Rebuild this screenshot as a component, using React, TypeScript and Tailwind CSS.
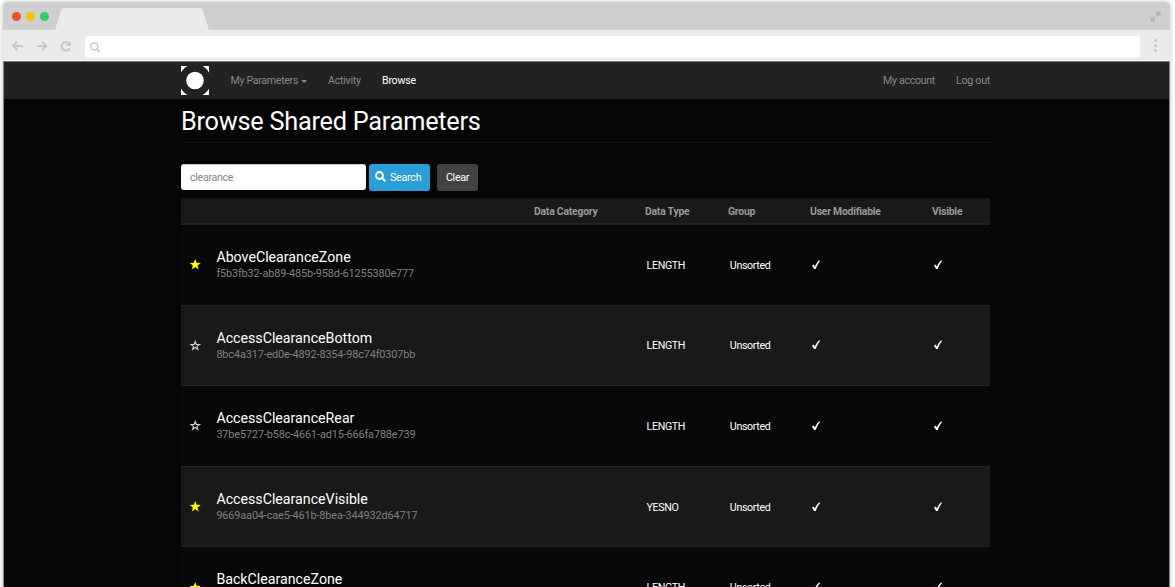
import React from "react";

type Parameter = {
  name: string;
  guid: string;
  type: string;
  starred: boolean;
};

const parameters: Parameter[] = [
  { name: "AboveClearanceZone", guid: "f5b3fb32-ab89-485b-958d-61255380e777", type: "LENGTH", starred: true },
  { name: "AccessClearanceBottom", guid: "8bc4a317-ed0e-4892-8354-98c74f0307bb", type: "LENGTH", starred: false },
  { name: "AccessClearanceRear", guid: "37be5727-b58c-4661-ad15-666fa788e739", type: "LENGTH", starred: false },
  { name: "AccessClearanceVisible", guid: "9669aa04-cae5-461b-8bea-344932d64717", type: "YESNO", starred: true },
  { name: "BackClearanceZone", guid: "", type: "LENGTH", starred: true },
];

const columns = "grid grid-cols-[35px_318px_111px_83px_82px_122px_1fr]";

function Star({ filled }: { filled: boolean }) {
  return filled ? (
    <svg className="h-[11px] w-[11px]" viewBox="0 0 11 11" fill="#ffff00">
      <path d="M5.2 0 6.6 3.8 10.8 3.9 7.5 6.5 8.7 10.4 5.2 8.1 1.8 10.4 2.9 6.5 -0.300 3.9 3.8 3.8Z" />
    </svg>
  ) : (
    <svg className="h-[11px] w-[11px]" viewBox="0 0 11 11" fill="none" stroke="#d0d0d0" strokeWidth="1.1">
      <path d="M5.2 1.5 6.2 4.5 9.400 4.600 6.900 6.400 7.800 9.300 5.200 7.500 2.600 9.300 3.500 6.400 1 4.600 4.200 4.500Z" />
    </svg>
  );
}

function Check() {
  return (
    <svg className="h-[10px] w-[9px]" viewBox="0 0 9 10" fill="#fff">
      <path d="M0 5.700 1.600 4.600 2.900 6.400C3.900 4 5.200 1.900 6.900 0.400L8.300 0.700C6.400 2.800 4.800 5.700 3.700 9H2.100Z" />
    </svg>
  );
}

function BrowserChrome() {
  return (
    <div className="shrink-0">
      <div className="flex h-7 items-stretch rounded-t-[4px] bg-[#cfcfcf]">
        <div className="flex w-[52px] shrink-0 items-center gap-[5px] pl-[9px]">
          <span className="h-[9px] w-[9px] rounded-full bg-[#ee4b33]" />
          <span className="h-[9px] w-[9px] rounded-full bg-[#f2c500]" />
          <span className="h-[9px] w-[9px] rounded-full bg-[#2ecb71]" />
        </div>
        <svg className="h-7 w-[154px]" viewBox="0 0 154 28" fill="#ebebeb">
          <path d="M0 28 6 8.5Q6.8 6 9 6H145Q147.200 6 148 8.500L154 28Z" />
        </svg>
        <div className="flex flex-1 items-center justify-end pr-[9px]">
          <svg className="h-[11px] w-[11px]" viewBox="0 0 11 11" fill="#b2b2b2">
            <path d="M5.300 0.500H10.5V5.700L8.900 4.100 7.100 5.700 5.300 3.900 6.900 2.100ZM0.500 5.300 2.100 6.900 3.900 5.300 5.700 7.100 4.100 8.900 5.700 10.500H0.500Z" />
          </svg>
        </div>
      </div>
      <div className="flex h-[30px] items-center bg-[#ebebeb] pt-[5px]">
        <svg className="-mt-[3px] ml-2 h-4 w-[61px]" viewBox="0 0 61 16" fill="none" stroke="#c7c7c7" strokeWidth="2">
          <path d="M12 8H2.500M6.300 3.700 2.200 8 6.300 12.300M26 8H35M31.200 3.700 35.300 8 31.200 12.300" />
          <path d="M58.500 10.700A4.300 4.300 0 1 1 58.300 5.800" strokeWidth="2.200" />
          <path d="M60 3V8H55Z" fill="#c7c7c7" stroke="none" />
        </svg>
        <div className="-mt-[1px] ml-[13px] flex h-[22px] w-[1055px] shrink-0 items-center rounded-[3px] bg-white pl-[5px]">
          <svg className="h-[11px] w-[11px]" viewBox="0 0 11 11" fill="none" stroke="#c7c7c7" strokeWidth="1.4">
            <circle cx="4.300" cy="4.500" r="3.500" />
            <path d="M6.900 7.100 9.600 9.800" strokeWidth="1.700" />
          </svg>
        </div>
        <div className="-mt-[4px] ml-[14px] flex flex-col gap-[2px]">
          <span className="h-[3px] w-[3px] rounded-full bg-[#c7c7c7]" />
          <span className="h-[3px] w-[3px] rounded-full bg-[#c7c7c7]" />
          <span className="h-[3px] w-[3px] rounded-full bg-[#c7c7c7]" />
        </div>
      </div>
      <div className="h-px bg-[#fafafa]" />
      <div className="h-px bg-[#777a78]" />
    </div>
  );
}

function NavBar() {
  return (
    <nav className="h-[37px] shrink-0 bg-[#222222]">
      <div className="ml-[177px] flex h-full w-[809px] items-center text-[10.7px] tracking-[-0.28px] text-[#888888]">
        <svg className="h-[29px] w-[28px]" viewBox="0 0 28 29" preserveAspectRatio="none">
          <path fill="#fff" d="M0 0H28V29H0Z" />
          <ellipse cx="14" cy="14.500" rx="16" ry="16.300" fill="#222" />
          <circle cx="14" cy="14.500" r="8.800" fill="#fff" />
        </svg>
        <span className="ml-[21.5px] w-[67px] whitespace-nowrap pt-[2px] tracking-[-0.35px]">My Parameters</span>
        <span className="ml-[3px] mt-[2px] border-x-[3px] border-t-[3px] border-x-transparent border-t-[#888888]" />
        <span className="ml-[21.5px] w-[54px] pt-[2px]">Activity</span>
        <span className="pt-[2px] text-white">Browse</span>
        <span className="ml-auto pt-[2px] tracking-[-0.35px]">My account</span>
        <span className="ml-[21px] pt-[2px]">Log out</span>
      </div>
    </nav>
  );
}

function SearchForm() {
  return (
    <form className="mt-[21px] flex h-[27px] text-[10.7px] tracking-[-0.32px]" onSubmit={(e) => e.preventDefault()}>
      <input
        className="h-[26px] w-[185px] rounded-[3px] border-t border-[#cccccc] bg-white px-[9px] text-[#888888] outline-none"
        defaultValue="clearance"
      />
      <button className="ml-[3px] flex w-[61px] items-center rounded-[3px] bg-[#2a9fd6] pl-[6px] text-white">
        <svg className="-mt-[3px] mr-[4px] h-[11px] w-[11px]" viewBox="0 0 11 11" fill="none" stroke="#fff">
          <circle cx="4.500" cy="4.500" r="3.500" strokeWidth="1.800" />
          <path d="M7 7 10.300 10.300" strokeWidth="2.200" />
        </svg>
        <span className="pt-px tracking-[-0.25px]">Search</span>
      </button>
      <button className="ml-[7px] w-[41px] rounded-[3px] bg-[#424242] pt-px text-white">Clear</button>
    </form>
  );
}

function ParameterTable() {
  return (
    <div className="mt-[7px]">
      <div className={`${columns} h-[27px] items-center border-b-2 border-[#222222] bg-[#191919] pt-[2px] text-[10.4px] font-bold tracking-[-0.22px] text-[#999999]`}>
        <span />
        <span />
        <span>Data Category</span>
        <span>Data Type</span>
        <span>Group</span>
        <span>User Modifiable</span>
        <span>Visible</span>
      </div>
      {parameters.map((p) => (
        <div
          key={p.name}
          className={`${columns} h-[80.6px] items-center border-b border-[#242424] text-[10.7px] tracking-[-0.35px] text-white odd:bg-[#191919] even:bg-[#080808]`}
        >
          <span className="pl-[9px]">
            <Star filled={p.starred} />
          </span>
          <span className="pl-[0.4px] pt-[0.5px]">
            <span className="block text-[14.2px] leading-[17px] tracking-normal">{p.name}</span>
            <span className="block h-[15px] text-[10.9px] leading-[15px] tracking-[-0.14px] text-[#808080]">{p.guid}</span>
          </span>
          <span />
          <span className="pl-[1.5px] pt-[2px]">{p.type}</span>
          <span className="pl-[1.8px] pt-[2px]">Unsorted</span>
          <span className="pl-[2px]">
            <Check />
          </span>
          <span className="pl-[2px]">
            <Check />
          </span>
        </div>
      ))}
    </div>
  );
}

export default function App() {
  return (
    <div className="flex h-[587px] w-[1175px] justify-start overflow-hidden bg-white pl-[3px] pt-[2px] font-['Roboto',sans-serif]">
      <div className="flex h-[700px] w-[1167px] shrink-0 flex-col overflow-hidden rounded-t-[4px] shadow-[0_0_5px_rgba(0,0,0,0.25)]">
        <BrowserChrome />
        <div className="flex flex-1 flex-col border-x border-[#858585]">
          <NavBar />
          <main className="flex-1 bg-[#060606]">
            <div className="ml-[177px] w-[809px]">
              <h1 className="h-[44px] border-b border-[#121212] pt-[6px] text-[25.3px] leading-[33px] tracking-[-0.25px] text-white">
                Browse Shared Parameters
              </h1>
              <SearchForm />
              <ParameterTable />
            </div>
          </main>
        </div>
      </div>
    </div>
  );
}
